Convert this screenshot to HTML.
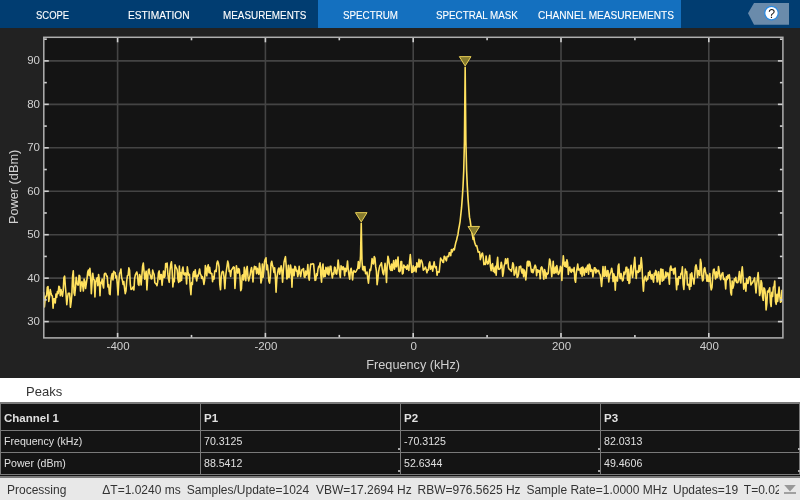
<!DOCTYPE html>
<html><head><meta charset="utf-8"><style>
*{margin:0;padding:0;box-sizing:border-box}
html,body{width:800px;height:500px;overflow:hidden;background:#222;font-family:"Liberation Sans",sans-serif}
#tabs,#plotsvg,#peaks,#tbl,#status{will-change:transform}
#tabs{position:absolute;left:0;top:0;width:800px;height:28px;background:#013d71}
#tabs .sel{position:absolute;left:318px;top:0;width:363px;height:28px;background:#1470bf}
#tabs span{position:absolute;top:7px;-webkit-text-stroke:0.12px #fff;color:#fff;font-size:11px;line-height:16px;white-space:nowrap;transform-origin:0 0}
#help{position:absolute;left:748px;top:3px;width:41px;height:22px}
#plot{position:absolute;left:0;top:28px;width:800px;height:350px;background:#222}
#peaks{position:absolute;left:0;top:378px;width:800px;height:24px;background:#fff}
#peaks span{position:absolute;left:26px;top:6px;font-size:13px;color:#333}
#tbl{position:absolute;left:0;top:402px;width:800px;height:76px;background:#141414}
#tbl .hl{position:absolute;left:0;width:800px;height:1px;background:#7a7a7a}
#tbl .vl{position:absolute;top:0;width:1px;height:72px;background:#7a7a7a}
#tbl span{position:absolute;white-space:nowrap;color:#e0e0e0;line-height:16px}
#tbl .dot{position:absolute;width:2px;height:2px;background:#aaa}
#tbl .h{font-size:11.5px;font-weight:bold}
#tbl .c{font-size:10.6px}
#status span{position:absolute;top:5px}
#status{position:absolute;left:0;top:478px;width:800px;height:22px;background:#e8e8e8;color:#333;font-size:12px;white-space:nowrap;overflow:hidden}
</style></head><body>
<div id="tabs"><div class="sel"></div>
<span style="left:36.3px;transform:scaleX(0.859)">SCOPE</span>
<span style="left:128.2px;transform:scaleX(0.927)">ESTIMATION</span>
<span style="left:223.1px;transform:scaleX(0.898)">MEASUREMENTS</span>
<span style="left:343.1px;transform:scaleX(0.89)">SPECTRUM</span>
<span style="left:436.3px;transform:scaleX(0.891)">SPECTRAL MASK</span>
<span style="left:537.5px;transform:scaleX(0.918)">CHANNEL MEASUREMENTS</span>
<svg id="help" width="41" height="22" viewBox="0 0 41 22"><polygon points="6,0 41,0 41,21.8 6,21.8 0,10.2" fill="#6a8bab"/><circle cx="23.5" cy="10.1" r="6.8" fill="#fff" stroke="#2b8ae0" stroke-width="1.3"/><text x="23.6" y="14.9" text-anchor="middle" font-size="12.3" fill="#111" font-family="Liberation Sans">?</text></svg>
</div>
<svg id="plotsvg" style="position:absolute;left:0;top:0" width="800" height="378" viewBox="0 0 800 378">
<rect x="0" y="28" width="800" height="350" fill="#222"/>
<rect x="43.8" y="37.3" width="739.1" height="300.59999999999997" fill="#141414"/>
<g stroke="#444" stroke-width="1.6"><line x1="43.8" y1="321.60" x2="782.9" y2="321.60"/><line x1="43.8" y1="278.15" x2="782.9" y2="278.15"/><line x1="43.8" y1="234.70" x2="782.9" y2="234.70"/><line x1="43.8" y1="191.25" x2="782.9" y2="191.25"/><line x1="43.8" y1="147.80" x2="782.9" y2="147.80"/><line x1="43.8" y1="104.35" x2="782.9" y2="104.35"/><line x1="43.8" y1="60.90" x2="782.9" y2="60.90"/><line x1="117.60" y1="37.3" x2="117.60" y2="337.9"/><line x1="265.40" y1="37.3" x2="265.40" y2="337.9"/><line x1="413.20" y1="37.3" x2="413.20" y2="337.9"/><line x1="561.00" y1="37.3" x2="561.00" y2="337.9"/><line x1="708.80" y1="37.3" x2="708.80" y2="337.9"/></g>
<polyline points="43.70,292.25 44.42,306.90 45.14,299.23 45.87,295.99 46.59,295.97 47.31,287.38 48.03,286.55 48.75,301.38 49.47,297.13 50.20,289.48 50.92,292.77 51.64,295.37 52.36,296.07 53.08,308.26 53.80,298.75 54.53,298.85 55.25,303.01 55.97,294.11 56.69,297.34 57.41,291.45 58.13,293.58 58.86,286.23 59.58,287.22 60.30,295.76 61.02,289.54 61.74,292.89 62.46,296.13 63.19,290.64 63.91,277.74 64.63,276.15 65.35,286.23 66.07,294.76 66.79,304.62 67.52,297.75 68.24,293.33 68.96,293.38 69.68,293.42 70.40,307.32 71.12,302.21 71.85,294.60 72.57,276.56 73.29,270.86 74.01,292.69 74.73,295.39 75.45,287.63 76.18,277.31 76.90,282.68 77.62,284.85 78.34,285.01 79.06,275.22 79.78,276.06 80.51,291.13 81.23,284.11 81.95,281.64 82.67,285.12 83.39,291.05 84.11,279.13 84.84,281.21 85.56,288.53 86.28,283.80 87.00,278.84 87.72,272.12 88.44,270.10 89.17,275.65 89.89,268.27 90.61,275.42 91.33,293.77 92.05,282.60 92.77,273.40 93.50,279.58 94.22,279.80 94.94,297.07 95.66,282.11 96.38,279.75 97.10,277.87 97.83,285.68 98.55,274.46 99.27,279.64 99.99,295.69 100.71,282.31 101.43,283.47 102.16,279.02 102.88,285.03 103.60,287.98 104.32,274.22 105.04,273.22 105.76,273.48 106.49,276.08 107.21,276.05 107.93,286.84 108.65,284.74 109.37,293.72 110.09,294.60 110.82,281.45 111.54,276.02 112.26,273.46 112.98,279.92 113.70,271.25 114.42,272.46 115.15,272.47 115.87,277.82 116.59,276.11 117.31,284.11 118.03,294.97 118.75,282.56 119.48,273.77 120.20,272.02 120.92,269.10 121.64,277.80 122.36,280.13 123.08,284.38 123.81,281.64 124.53,288.09 125.25,293.62 125.97,291.11 126.69,281.15 127.41,275.80 128.14,275.40 128.86,267.90 129.58,270.34 130.30,284.47 131.02,289.35 131.74,289.23 132.47,288.16 133.19,286.82 133.91,289.99 134.63,278.37 135.35,274.89 136.07,273.37 136.80,272.00 137.52,274.97 138.24,284.24 138.96,285.31 139.68,274.61 140.41,277.10 141.13,284.90 141.85,276.10 142.57,266.34 143.29,263.10 144.01,271.15 144.74,279.18 145.46,274.74 146.18,271.18 146.90,289.84 147.62,278.63 148.34,270.01 149.07,268.99 149.79,273.64 150.51,275.75 151.23,278.90 151.95,278.78 152.67,270.13 153.40,272.92 154.12,274.40 154.84,282.60 155.56,283.64 156.28,283.87 157.00,285.73 157.73,281.54 158.45,272.99 159.17,270.94 159.89,279.37 160.61,274.67 161.33,274.48 162.06,285.20 162.78,278.02 163.50,271.13 164.22,277.53 164.94,276.12 165.66,263.61 166.39,266.94 167.11,262.97 167.83,273.97 168.55,279.39 169.27,282.32 169.99,270.34 170.72,264.57 171.44,261.88 172.16,270.76 172.88,286.96 173.60,279.12 174.32,281.69 175.05,264.91 175.77,267.01 176.49,268.08 177.21,270.02 177.93,279.17 178.65,282.42 179.38,266.10 180.10,281.41 180.82,272.45 181.54,280.39 182.26,269.72 182.98,266.98 183.71,274.05 184.43,274.96 185.15,272.90 185.87,273.38 186.59,283.99 187.31,266.84 188.04,271.98 188.76,275.39 189.48,274.41 190.20,287.63 190.92,294.71 191.64,282.47 192.37,284.52 193.09,273.84 193.81,271.45 194.53,276.63 195.25,269.89 195.97,276.70 196.70,280.85 197.42,275.22 198.14,276.13 198.86,272.74 199.58,268.97 200.30,273.85 201.03,275.24 201.75,278.39 202.47,276.60 203.19,279.45 203.91,284.37 204.63,280.17 205.36,265.53 206.08,269.66 206.80,275.81 207.52,267.26 208.24,264.73 208.96,272.73 209.69,267.32 210.41,273.49 211.13,273.09 211.85,273.57 212.57,281.75 213.29,276.56 214.02,279.07 214.74,270.99 215.46,270.38 216.18,271.63 216.90,263.15 217.62,261.03 218.35,263.03 219.07,267.01 219.79,284.35 220.51,289.77 221.23,276.82 221.95,272.15 222.68,271.30 223.40,272.02 224.12,278.48 224.84,288.76 225.56,276.85 226.28,271.23 227.01,266.36 227.73,261.10 228.45,263.98 229.17,271.56 229.89,270.86 230.62,276.36 231.34,270.13 232.06,269.16 232.78,267.98 233.50,266.84 234.22,267.63 234.95,288.55 235.67,277.78 236.39,265.71 237.11,270.19 237.83,273.15 238.55,268.56 239.28,269.56 240.00,276.69 240.72,290.59 241.44,288.75 242.16,275.59 242.88,274.86 243.61,280.04 244.33,267.26 245.05,272.97 245.77,280.61 246.49,269.23 247.21,266.42 247.94,276.43 248.66,280.88 249.38,278.04 250.10,275.09 250.82,270.34 251.54,267.49 252.27,272.69 252.99,281.93 253.71,270.72 254.43,266.33 255.15,268.91 255.87,266.83 256.60,273.60 257.32,268.26 258.04,271.81 258.76,274.31 259.48,263.38 260.20,268.77 260.93,283.02 261.65,280.11 262.37,263.96 263.09,277.16 263.81,271.18 264.53,261.68 265.26,259.26 265.98,257.72 266.70,269.68 267.42,265.13 268.14,271.35 268.86,280.98 269.59,283.09 270.31,276.68 271.03,263.55 271.75,261.30 272.47,265.32 273.19,267.75 273.92,272.36 274.64,267.83 275.36,276.42 276.08,292.23 276.80,279.10 277.52,273.61 278.25,269.43 278.97,267.96 279.69,274.09 280.41,270.01 281.13,265.84 281.85,270.71 282.58,282.25 283.30,270.91 284.02,262.28 284.74,259.21 285.46,256.67 286.18,265.88 286.91,278.90 287.63,277.00 288.35,265.40 289.07,277.45 289.79,272.57 290.51,265.06 291.24,269.29 291.96,287.10 292.68,269.37 293.40,269.23 294.12,275.80 294.84,266.40 295.57,267.06 296.29,271.20 297.01,270.36 297.73,276.55 298.45,273.47 299.17,266.30 299.90,272.67 300.62,276.58 301.34,272.51 302.06,269.51 302.78,269.49 303.50,268.59 304.23,276.91 304.95,277.40 305.67,271.08 306.39,275.02 307.11,272.45 307.83,264.47 308.56,276.79 309.28,280.09 310.00,270.33 310.72,264.13 311.44,264.18 312.16,263.91 312.89,263.62 313.61,264.09 314.33,272.09 315.05,280.34 315.77,280.01 316.49,273.80 317.22,275.43 317.94,269.37 318.66,266.31 319.38,266.92 320.10,262.91 320.82,274.97 321.55,282.24 322.27,267.57 322.99,263.94 323.71,277.00 324.43,270.60 325.16,276.37 325.88,267.41 326.60,268.66 327.32,273.92 328.04,267.05 328.76,275.01 329.49,270.76 330.21,266.25 330.93,266.34 331.65,274.20 332.37,277.93 333.09,273.05 333.82,274.23 334.54,267.08 335.26,267.84 335.98,273.58 336.70,274.13 337.42,268.41 338.15,260.08 338.87,266.35 339.59,273.42 340.31,277.42 341.03,265.70 341.75,267.40 342.48,269.56 343.20,266.82 343.92,268.41 344.64,275.61 345.36,268.18 346.08,271.46 346.81,267.88 347.53,261.06 348.25,270.00 348.97,275.06 349.69,279.11 350.41,270.56 351.14,268.36 351.86,272.74 352.58,280.03 353.30,272.33 354.02,270.55 354.74,271.78 355.47,272.18 356.19,271.09 356.91,269.56 357.63,268.75 358.35,261.61 359.07,268.42 359.80,266.36 360.52,255.87 361.24,223.25 361.96,260.51 362.68,269.58 363.40,266.49 364.13,270.79 364.85,266.53 365.57,273.68 366.29,273.77 367.01,272.05 367.73,277.86 368.46,283.14 369.18,275.79 369.90,269.38 370.62,270.48 371.34,265.80 372.06,258.56 372.79,262.93 373.51,263.95 374.23,256.67 374.95,258.19 375.67,266.65 376.39,270.87 377.12,284.75 377.84,279.14 378.56,271.86 379.28,267.87 380.00,265.38 380.72,264.77 381.45,262.79 382.17,268.51 382.89,272.86 383.61,274.59 384.33,269.25 385.05,263.24 385.78,270.30 386.50,282.46 387.22,265.21 387.94,256.30 388.66,259.27 389.38,264.73 390.11,269.19 390.83,270.46 391.55,263.96 392.27,270.38 392.99,265.96 393.71,260.44 394.44,269.13 395.16,265.57 395.88,259.73 396.60,266.82 397.32,263.08 398.04,256.96 398.77,271.13 399.49,271.67 400.21,270.83 400.93,261.60 401.65,261.65 402.37,274.01 403.10,273.22 403.82,265.04 404.54,266.31 405.26,267.70 405.98,266.61 406.70,269.19 407.43,265.15 408.15,268.73 408.87,270.35 409.59,261.31 410.31,254.66 411.03,263.09 411.76,272.38 412.48,272.30 413.20,265.85 413.92,271.25 414.64,269.05 415.37,266.73 416.09,271.97 416.81,262.77 417.53,266.91 418.25,266.81 418.97,259.29 419.70,266.96 420.42,261.30 421.14,259.98 421.86,261.41 422.58,264.25 423.30,270.19 424.03,269.51 424.75,268.51 425.47,266.96 426.19,269.36 426.91,272.71 427.63,269.75 428.36,270.19 429.08,264.01 429.80,261.91 430.52,269.28 431.24,266.83 431.96,266.12 432.69,271.13 433.41,266.17 434.13,261.82 434.85,266.55 435.57,267.94 436.29,266.71 437.02,275.25 437.74,271.74 438.46,271.75 439.18,272.20 439.90,265.01 440.62,258.09 441.35,259.72 442.07,259.98 442.79,262.31 443.51,262.50 444.23,256.18 444.95,256.87 445.68,259.27 446.40,260.82 447.12,256.49 447.84,256.19 448.56,256.57 449.28,252.65 450.01,252.92 450.73,255.61 451.45,249.45 452.17,251.95 452.89,250.01 453.61,248.71 454.34,249.81 455.06,245.97 455.78,242.55 456.50,240.57 457.22,236.97 457.94,234.72 458.67,229.23 459.39,225.55 460.11,221.26 460.83,214.46 461.55,207.69 462.27,198.11 463.00,186.85 463.72,171.12 464.44,141.25 465.16,67.24 465.88,141.00 466.60,170.29 467.33,186.63 468.05,199.34 468.77,208.63 469.49,217.18 470.21,220.82 470.93,226.23 471.66,231.26 472.38,234.83 473.10,239.41 473.82,237.04 474.54,242.10 475.26,244.31 475.99,245.98 476.71,245.58 477.43,248.64 478.15,252.18 478.87,251.76 479.59,252.00 480.32,259.58 481.04,257.29 481.76,253.92 482.48,253.03 483.20,257.22 483.92,264.65 484.65,263.66 485.37,264.34 486.09,256.12 486.81,261.31 487.53,264.04 488.25,263.56 488.98,259.21 489.70,255.27 490.42,266.05 491.14,270.73 491.86,265.05 492.58,263.61 493.31,271.46 494.03,268.06 494.75,272.59 495.47,266.24 496.19,275.19 496.91,263.77 497.64,257.29 498.36,268.97 499.08,269.44 499.80,268.95 500.52,267.65 501.24,262.26 501.97,265.84 502.69,276.29 503.41,272.75 504.13,265.75 504.85,263.74 505.57,258.72 506.30,263.62 507.02,261.41 507.74,258.54 508.46,267.72 509.18,269.15 509.91,269.78 510.63,269.85 511.35,271.40 512.07,267.97 512.79,262.79 513.51,264.79 514.24,275.13 514.96,273.65 515.68,270.47 516.40,267.03 517.12,277.43 517.84,276.86 518.57,274.34 519.29,266.53 520.01,267.31 520.73,266.08 521.45,271.34 522.17,273.09 522.90,268.93 523.62,276.64 524.34,270.15 525.06,272.38 525.78,279.94 526.50,272.76 527.23,262.06 527.95,261.16 528.67,266.01 529.39,261.42 530.11,263.09 530.83,267.91 531.56,272.08 532.28,269.59 533.00,272.81 533.72,270.27 534.44,267.01 535.16,265.13 535.89,266.98 536.61,275.65 537.33,269.85 538.05,272.21 538.77,270.32 539.49,270.88 540.22,278.82 540.94,267.99 541.66,266.86 542.38,268.40 543.10,273.28 543.82,279.15 544.55,269.44 545.27,271.87 545.99,278.30 546.71,273.11 547.43,274.26 548.15,273.50 548.88,266.04 549.60,258.95 550.32,261.42 551.04,268.27 551.76,276.65 552.48,269.83 553.21,261.40 553.93,273.53 554.65,272.37 555.37,267.16 556.09,272.89 556.81,265.53 557.54,269.70 558.26,274.44 558.98,273.50 559.70,271.36 560.42,266.24 561.14,267.98 561.87,280.46 562.59,265.88 563.31,255.73 564.03,263.41 564.75,266.28 565.47,262.17 566.20,267.18 566.92,259.78 567.64,262.95 568.36,274.45 569.08,267.81 569.80,267.14 570.53,270.98 571.25,272.37 571.97,269.15 572.69,270.34 573.41,271.65 574.13,267.54 574.86,279.44 575.58,282.18 576.30,273.06 577.02,268.51 577.74,264.12 578.46,270.03 579.19,269.92 579.91,268.85 580.63,273.71 581.35,267.54 582.07,276.23 582.79,267.09 583.52,269.15 584.24,275.17 584.96,269.86 585.68,268.16 586.40,272.29 587.12,266.90 587.85,265.13 588.57,274.10 589.29,264.09 590.01,265.44 590.73,271.49 591.45,269.49 592.18,270.09 592.90,277.01 593.62,271.94 594.34,267.82 595.06,267.86 595.78,272.97 596.51,269.41 597.23,271.61 597.95,271.17 598.67,270.33 599.39,273.72 600.12,274.52 600.84,279.46 601.56,286.54 602.28,278.26 603.00,266.46 603.72,275.96 604.45,276.22 605.17,266.62 605.89,274.89 606.61,276.51 607.33,270.50 608.05,270.73 608.78,281.94 609.50,276.30 610.22,273.53 610.94,271.49 611.66,268.20 612.38,271.99 613.11,281.57 613.83,273.83 614.55,276.75 615.27,290.14 615.99,276.92 616.71,277.74 617.44,281.08 618.16,266.10 618.88,264.11 619.60,275.96 620.32,278.56 621.04,273.59 621.77,278.00 622.49,280.90 623.21,280.02 623.93,271.98 624.65,274.52 625.37,272.05 626.10,267.24 626.82,267.40 627.54,280.31 628.26,269.38 628.98,283.57 629.70,282.60 630.43,269.72 631.15,265.40 631.87,273.31 632.59,277.45 633.31,272.10 634.03,264.16 634.76,257.41 635.48,268.51 636.20,278.44 636.92,271.01 637.64,271.53 638.36,272.40 639.09,265.18 639.81,271.42 640.53,267.12 641.25,257.46 641.97,265.24 642.69,281.15 643.42,291.26 644.14,280.58 644.86,277.39 645.58,276.11 646.30,281.00 647.02,278.55 647.75,279.38 648.47,272.56 649.19,275.35 649.91,271.12 650.63,276.09 651.35,279.00 652.08,274.45 652.80,278.91 653.52,282.20 654.24,273.38 654.96,275.19 655.68,270.42 656.41,271.80 657.13,281.91 657.85,277.14 658.57,271.69 659.29,280.99 660.01,284.32 660.74,268.99 661.46,269.23 662.18,281.15 662.90,269.66 663.62,280.17 664.34,277.37 665.07,277.66 665.79,271.97 666.51,276.59 667.23,273.30 667.95,272.94 668.67,276.46 669.40,284.14 670.12,268.15 670.84,265.97 671.56,270.26 672.28,269.35 673.00,269.17 673.73,274.03 674.45,268.66 675.17,268.07 675.89,279.52 676.61,289.80 677.33,278.54 678.06,284.68 678.78,276.69 679.50,277.36 680.22,278.36 680.94,273.38 681.66,273.89 682.39,266.73 683.11,283.93 683.83,289.36 684.55,279.52 685.27,269.14 685.99,272.59 686.72,271.61 687.44,284.88 688.16,284.28 688.88,285.63 689.60,289.36 690.33,274.12 691.05,286.30 691.77,272.86 692.49,278.33 693.21,278.71 693.93,284.06 694.66,276.15 695.38,266.74 696.10,264.88 696.82,268.78 697.54,277.34 698.26,270.56 698.99,273.18 699.71,275.55 700.43,259.33 701.15,262.83 701.87,275.97 702.59,280.94 703.32,279.75 704.04,269.08 704.76,267.71 705.48,271.66 706.20,275.01 706.92,281.28 707.65,274.99 708.37,281.45 709.09,281.21 709.81,273.49 710.53,285.50 711.25,289.85 711.98,287.54 712.70,276.70 713.42,269.80 714.14,269.10 714.86,274.01 715.58,279.03 716.31,271.80 717.03,277.49 717.75,276.48 718.47,266.47 719.19,271.11 719.91,276.22 720.64,279.70 721.36,275.40 722.08,273.43 722.80,272.69 723.52,279.54 724.24,278.47 724.97,280.37 725.69,289.00 726.41,276.85 727.13,279.58 727.85,275.30 728.57,277.91 729.30,274.67 730.02,280.82 730.74,292.58 731.46,294.96 732.18,280.94 732.90,288.12 733.63,285.37 734.35,278.76 735.07,280.76 735.79,277.32 736.51,282.40 737.23,282.74 737.96,282.48 738.68,277.77 739.40,271.65 740.12,280.61 740.84,282.91 741.56,272.61 742.29,266.88 743.01,276.42 743.73,289.17 744.45,284.39 745.17,283.38 745.89,291.25 746.62,278.72 747.34,283.07 748.06,283.45 748.78,277.86 749.50,276.72 750.22,277.10 750.95,284.92 751.67,283.34 752.39,283.04 753.11,281.41 753.83,279.87 754.55,277.91 755.28,285.26 756.00,292.96 756.72,284.12 757.44,278.08 758.16,272.52 758.88,283.02 759.61,295.46 760.33,292.61 761.05,280.44 761.77,282.89 762.49,296.19 763.21,300.33 763.94,287.90 764.66,288.89 765.38,294.13 766.10,309.85 766.82,303.95 767.54,291.12 768.27,292.11 768.99,289.76 769.71,287.79 770.43,302.65 771.15,306.50 771.87,292.40 772.60,296.42 773.32,287.20 774.04,286.52 774.76,280.94 775.48,301.63 776.20,304.31 776.93,294.22 777.65,301.54 778.37,294.19 779.09,287.11 779.81,296.17 780.53,302.30 781.26,301.46 781.98,289.75" fill="none" stroke="#ffe15e" stroke-width="1.6" stroke-linejoin="round"/>
<g fill="#857a2e" stroke="#e8cf55" stroke-width="1"><polygon points="459.36,56.64 470.96,56.64 465.16,65.94"/><polygon points="355.44,212.65 367.04,212.65 361.24,221.95"/><polygon points="468.02,226.44 479.62,226.44 473.82,235.74"/></g>
<g stroke="#d0d0d0" stroke-width="1.6"><line x1="43.8" y1="321.60" x2="48.8" y2="321.60"/><line x1="782.9" y1="321.60" x2="777.9" y2="321.60"/><line x1="43.8" y1="278.15" x2="48.8" y2="278.15"/><line x1="782.9" y1="278.15" x2="777.9" y2="278.15"/><line x1="43.8" y1="234.70" x2="48.8" y2="234.70"/><line x1="782.9" y1="234.70" x2="777.9" y2="234.70"/><line x1="43.8" y1="191.25" x2="48.8" y2="191.25"/><line x1="782.9" y1="191.25" x2="777.9" y2="191.25"/><line x1="43.8" y1="147.80" x2="48.8" y2="147.80"/><line x1="782.9" y1="147.80" x2="777.9" y2="147.80"/><line x1="43.8" y1="104.35" x2="48.8" y2="104.35"/><line x1="782.9" y1="104.35" x2="777.9" y2="104.35"/><line x1="43.8" y1="60.90" x2="48.8" y2="60.90"/><line x1="782.9" y1="60.90" x2="777.9" y2="60.90"/><line x1="43.8" y1="299.88" x2="46.8" y2="299.88"/><line x1="782.9" y1="299.88" x2="779.9" y2="299.88"/><line x1="43.8" y1="256.43" x2="46.8" y2="256.43"/><line x1="782.9" y1="256.43" x2="779.9" y2="256.43"/><line x1="43.8" y1="212.98" x2="46.8" y2="212.98"/><line x1="782.9" y1="212.98" x2="779.9" y2="212.98"/><line x1="43.8" y1="169.53" x2="46.8" y2="169.53"/><line x1="782.9" y1="169.53" x2="779.9" y2="169.53"/><line x1="43.8" y1="126.08" x2="46.8" y2="126.08"/><line x1="782.9" y1="126.08" x2="779.9" y2="126.08"/><line x1="43.8" y1="82.63" x2="46.8" y2="82.63"/><line x1="782.9" y1="82.63" x2="779.9" y2="82.63"/><line x1="43.8" y1="39.18" x2="46.8" y2="39.18"/><line x1="782.9" y1="39.18" x2="779.9" y2="39.18"/><line x1="117.60" y1="337.9" x2="117.60" y2="332.9"/><line x1="117.60" y1="37.3" x2="117.60" y2="42.3"/><line x1="265.40" y1="337.9" x2="265.40" y2="332.9"/><line x1="265.40" y1="37.3" x2="265.40" y2="42.3"/><line x1="413.20" y1="337.9" x2="413.20" y2="332.9"/><line x1="413.20" y1="37.3" x2="413.20" y2="42.3"/><line x1="561.00" y1="337.9" x2="561.00" y2="332.9"/><line x1="561.00" y1="37.3" x2="561.00" y2="42.3"/><line x1="708.80" y1="337.9" x2="708.80" y2="332.9"/><line x1="708.80" y1="37.3" x2="708.80" y2="42.3"/><line x1="191.50" y1="337.9" x2="191.50" y2="334.9"/><line x1="191.50" y1="37.3" x2="191.50" y2="40.3"/><line x1="339.30" y1="337.9" x2="339.30" y2="334.9"/><line x1="339.30" y1="37.3" x2="339.30" y2="40.3"/><line x1="487.10" y1="337.9" x2="487.10" y2="334.9"/><line x1="487.10" y1="37.3" x2="487.10" y2="40.3"/><line x1="634.90" y1="337.9" x2="634.90" y2="334.9"/><line x1="634.90" y1="37.3" x2="634.90" y2="40.3"/></g>
<rect x="43.8" y="37.3" width="739.1" height="300.59999999999997" fill="none" stroke="#b0b0b0" stroke-width="1.5"/>
<g fill="#d0d0d0" font-size="11.5" font-family="Liberation Sans"><text x="40" y="325.00" text-anchor="end">30</text><text x="40" y="281.55" text-anchor="end">40</text><text x="40" y="238.10" text-anchor="end">50</text><text x="40" y="194.65" text-anchor="end">60</text><text x="40" y="151.20" text-anchor="end">70</text><text x="40" y="107.75" text-anchor="end">80</text><text x="40" y="64.30" text-anchor="end">90</text><text x="118.10" y="350.4" text-anchor="middle">-400</text><text x="265.90" y="350.4" text-anchor="middle">-200</text><text x="413.70" y="350.4" text-anchor="middle">0</text><text x="561.50" y="350.4" text-anchor="middle">200</text><text x="709.30" y="350.4" text-anchor="middle">400</text></g>
<text x="413.2" y="368.8" text-anchor="middle" fill="#d0d0d0" font-size="12.7" font-family="Liberation Sans">Frequency (kHz)</text>
<text transform="translate(17.7,186.9) rotate(-90)" text-anchor="middle" fill="#d0d0d0" font-size="12.75" font-family="Liberation Sans">Power (dBm)</text>
</svg>
<div id="peaks"><span>Peaks</span></div>
<div id="tbl">
<div class="hl" style="top:0;height:2px"></div>
<div class="hl" style="top:28px"></div>
<div class="hl" style="top:50px"></div>
<div class="hl" style="top:71.5px;height:1px"></div>
<div class="hl" style="top:73.5px;height:2.5px"></div>
<div class="vl" style="left:0"></div>
<div class="vl" style="left:200px"></div>
<div class="vl" style="left:400px"></div>
<div class="vl" style="left:600px"></div>
<div class="vl" style="left:799px"></div>
<div class="dot" style="left:397.5px;top:46px"></div><div class="dot" style="left:397.5px;top:68px"></div><div class="dot" style="left:597.5px;top:46px"></div><div class="dot" style="left:597.5px;top:68px"></div><div class="dot" style="left:797.5px;top:46px"></div><div class="dot" style="left:797.5px;top:68px"></div>
<span class="h" style="left:4px;top:8px">Channel 1</span>
<span class="h" style="left:204px;top:8px">P1</span>
<span class="h" style="left:404px;top:8px">P2</span>
<span class="h" style="left:604px;top:8px">P3</span>
<span class="c" style="left:4px;top:31px">Frequency (kHz)</span>
<span class="c" style="left:204px;top:31px">70.3125</span>
<span class="c" style="left:404px;top:31px">-70.3125</span>
<span class="c" style="left:604px;top:31px">82.0313</span>
<span class="c" style="left:4px;top:53px">Power (dBm)</span>
<span class="c" style="left:204px;top:53px">88.5412</span>
<span class="c" style="left:404px;top:53px">52.6344</span>
<span class="c" style="left:604px;top:53px">49.4606</span>
</div>
<div id="status"><span style="left:7px">Processing</span><div style="position:absolute;left:0;top:0;width:779px;height:23px;overflow:hidden">
<span style="left:102.3px">ΔT=1.0240 ms</span>
<span style="left:186.8px">Samples/Update=1024</span>
<span style="left:316px">VBW=17.2694 Hz</span>
<span style="left:417.5px">RBW=976.5625 Hz</span>
<span style="left:526.4px">Sample Rate=1.0000 MHz</span>
<span style="left:673px">Updates=19</span>
<span style="left:743.8px">T=0.0214</span></div>
<svg style="position:absolute;left:784px;top:7px" width="12" height="9" viewBox="0 0 12 9"><polygon points="0.2,0 11.8,0 6,6.4" fill="#999"/><rect x="0" y="7.1" width="12" height="1.8" fill="#999"/></svg>
</div>
</body></html>
